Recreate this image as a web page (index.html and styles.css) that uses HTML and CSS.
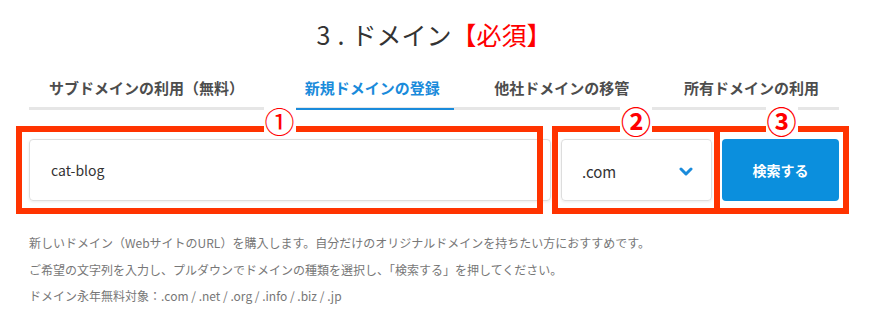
FILE: index.html
```html
<!DOCTYPE html>
<html lang="ja">
<head>
    <meta charset="UTF-8">
    <meta name="viewport" content="width=device-width, initial-scale=1.0">
    <title>ドメイン</title>
    <link rel="stylesheet" href="styles.css">
</head>
<body>
    <div class="page">
        <h2 class="title"><span class="num">3.</span>ドメイン<span class="required">【必須】</span></h2>

        <div class="tabs">
            <div class="tab">サブドメインの利用（無料）</div>
            <div class="tab active">新規ドメインの登録</div>
            <div class="tab">他社ドメインの移管</div>
            <div class="tab">所有ドメインの利用</div>
        </div>

        <div class="search">
            <div class="field">cat-blog</div>
            <div class="select">
                <span>.com</span>
                <svg class="chevron" width="14" height="9" viewBox="0 0 14 9">
                    <polyline points="2,2 7,7 12,2" fill="none" stroke="#1a8bdb" stroke-width="3" stroke-linecap="round" stroke-linejoin="round"/>
                </svg>
            </div>
            <button class="btn">検索する</button>

            <div class="mark mark-1"><span class="mark-num mark-num-1">①</span></div>
            <div class="mark mark-2"><span class="mark-num">②</span></div>
            <div class="mark mark-3"><span class="mark-num">③</span></div>
        </div>

        <div class="help">
            <p>新しいドメイン（WebサイトのURL）を購入します。自分だけのオリジナルドメインを持ちたい方におすすめです。</p>
            <p>ご希望の文字列を入力し、プルダウンでドメインの種類を選択し、「検索する」を押してください。</p>
            <p>ドメイン永年無料対象：.com / .net / .org / .info / .biz / .jp</p>
        </div>
    </div>
</body>
</html>
```

FILE: styles.css
```css
body {
    margin: 0;
    padding: 0;
    background-color: #fff;
    font-family: "Noto Sans CJK JP", "Noto Sans", sans-serif;
    color: #333;
}

.page {
    width: 810px;
    padding: 0 31px 0 29px;
}

.title {
    margin: 0;
    padding-top: 16px;
    font-size: 25px;
    font-weight: normal;
    line-height: 36px;
    text-align: center;
    color: #333;
}

.title .num {
    letter-spacing: 7px;
}

.title .required {
    color: #f00;
}

.tabs {
    display: flex;
    justify-content: space-between;
    margin-top: 15px;
    padding: 0 6px;
    border-bottom: 3px solid #e6e6e6;
}

.tab {
    padding: 10px 14px 8px;
    font-size: 15px;
    font-weight: bold;
    line-height: 22px;
    color: #4d4d4d;
}

.tab.active {
    margin-left: 6px;
    margin-bottom: -3px;
    color: #1a8bdb;
    border-bottom: 2px solid #1a8bdb;
    padding-bottom: 9px;
}

.search {
    position: relative;
    display: flex;
    gap: 10px;
    margin-top: 29px;
    height: 62px;
}

.field {
    flex: 1;
    display: flex;
    align-items: center;
    padding: 0 21px;
    border: 1px solid #ddd;
    border-radius: 4px;
    box-shadow: 0 1px 3px rgba(0, 0, 0, 0.08);
    font-size: 14px;
    color: #333;
}

.select {
    width: 151px;
    box-sizing: border-box;
    display: flex;
    align-items: center;
    justify-content: space-between;
    padding: 2px 18px 0 20px;
    border: 1px solid #ddd;
    border-radius: 4px;
    box-shadow: 0 1px 3px rgba(0, 0, 0, 0.08);
    font-size: 15px;
    color: #333;
}

.chevron {
    display: block;
}

.btn {
    width: 117px;
    border: none;
    border-radius: 4px;
    background-color: #0b8fdd;
    color: #fff;
    font-family: inherit;
    font-size: 14px;
    font-weight: bold;
}

/* annotation boxes */
.mark {
    position: absolute;
    top: -13px;
    height: 88px;
    box-sizing: border-box;
    border: 6px solid #ff3300;
}

.mark-1 {
    left: -13px;
    width: 527px;
}

.mark-2 {
    left: 523px;
    width: 168px;
}

.mark-3 {
    left: 685px;
    width: 135px;
}

.mark-num {
    position: absolute;
    top: -27px;
    left: 50%;
    transform: translateX(-50%);
    padding: 0 1px;
    background-color: #fff;
    color: #f00;
    font-size: 30px;
    font-weight: bold;
    line-height: 30px;
}

.mark-num-1 {
    font-weight: normal;
}

.help {
    margin-top: 29px;
    font-size: 12px;
    line-height: 26.5px;
    color: #777;
}

.help p {
    margin: 0;
}
```
